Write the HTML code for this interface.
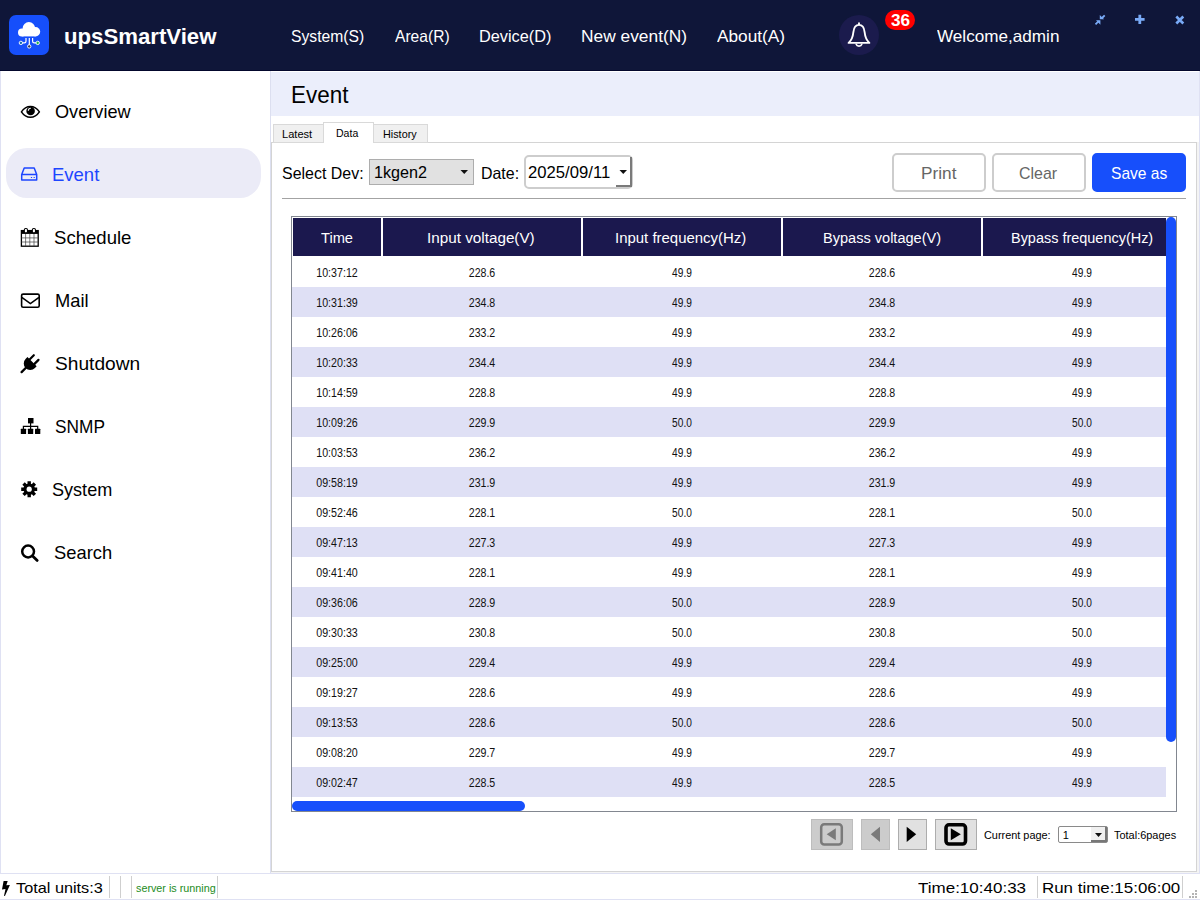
<!DOCTYPE html>
<html><head><meta charset="utf-8"><title>upsSmartView</title>
<style>
*{box-sizing:border-box;margin:0;padding:0}
html,body{width:1200px;height:900px;overflow:hidden;background:#fff;font-family:"Liberation Sans","DejaVu Sans",sans-serif;color:#111}
#app{position:relative;width:1200px;height:900px;overflow:hidden;background:#fff}
#app div,#app svg,#app span{position:absolute}
.t{white-space:nowrap;transform-origin:0 0}
#hdr{left:0;top:0;width:1200px;height:71px;background:#0f1639;border-bottom:1px solid #03072c}
#logo{left:9px;top:15px;width:40px;height:40px;border-radius:7px;background:#164ffb}
#bell{left:839px;top:15px;width:40px;height:40px;border-radius:20px;background:#1b1b4d}
#badge{left:885px;top:10px;width:30px;height:20px;border-radius:10px;background:#ff0000}
#side{left:0;top:71px;width:271px;height:802px;background:#fff;border-right:1px solid #dcdff0;border-left:1px solid #dfe1f3}
#sel{left:6px;top:148px;width:255px;height:50px;border-radius:21px;background:#ebebf7}
#title{left:271px;top:72px;width:928px;height:44px;background:#ebeefb}
#rbord{left:1199px;top:71px;width:1px;height:829px;background:#dfe1f3}
#tabbg{left:1197px;top:142px;width:2px;height:731px;background:#f4f4f4}
#tabbg2{left:271px;top:872px;width:928px;height:1px;background:#f4f4f4}
.tab{border:1px solid #d9d9d9;background:#f0f0f0}
#pane{left:271px;top:142px;width:926px;height:730px;border:1px solid #d4d4d4;background:#fff}
.btn{top:153px;width:94px;height:39px;border-radius:5px;border:2px solid #cdcdcd;background:#fff}
#hr{left:282px;top:198px;width:904px;height:1px;background:#a3a3a3}
#tbl{left:291px;top:216px;width:886px;height:596px;border:1px solid #828790;background:#fff}
.th{top:218px;height:38px;background:#1b184e}
.r{left:292px;width:874px;height:30px;overflow:hidden}
.r.alt{background:#dfe0f5}
.r span{top:0;height:30px;line-height:30px;font-size:12px;text-align:center;white-space:nowrap;color:#111;transform-origin:50% 0}
#vs{left:1166px;top:217px;width:10px;height:525px;border-radius:5px;background:#174ffb}
#hs{left:292px;top:801px;width:233px;height:10px;border-radius:5px;background:#174ffb}
.pb{top:819px;height:31px;border:1px solid #bdbdbd;background:#cccccc}
.pb.on{background:#e1e1e1;border-color:#adadad}
#status{left:0;top:873px;width:1200px;height:27px;background:#fff;border-top:1px solid #dfe1f3;border-bottom:1px solid #dfe1f3}
.sep{top:876px;width:1px;height:22px;background:#cfcfcf}
</style></head><body>
<div id="app">
<div id="hdr"></div>
<div id="logo"><svg style="left:0;top:0" width="40" height="40" viewBox="0 0 40 40">
<g fill="#fff"><circle cx="12.900" cy="17.500" r="3.900"/><circle cx="19.900" cy="13.400" r="6.300"/><circle cx="26.500" cy="16.700" r="4.700"/><rect x="12.900" y="15" width="13.600" height="6.400"/></g>
<g fill="none" stroke="#fff" stroke-width="1.200"><path d="M20.300 23v7M17 23v3.200q0 1.700-1.700 1.700h-2M23.600 23v3.200q0 1.700 1.700 1.700h2"/></g>
<circle cx="20.200" cy="31.400" r="1.700" fill="#333a55" stroke="#fff" stroke-width="0.900"/><circle cx="11.900" cy="27.900" r="1.700" fill="#1a6fb0" stroke="#fff" stroke-width="0.900"/><circle cx="28.700" cy="27.900" r="1.700" fill="#1fb24a" stroke="#fff" stroke-width="0.900"/></svg></div>
<div id="bell"><svg style="left:0;top:0" width="40" height="40" viewBox="0 0 40 40"><path d="M20 8.200v1.600M9.600 27.900C12.600 25.300 13.900 22 14.400 17C14.900 12.200 17 9.900 20 9.900C23 9.900 25.100 12.200 25.600 17C26.100 22 27.400 25.300 30.400 27.900Z" fill="none" stroke="#fff" stroke-width="1.900" stroke-linejoin="round" stroke-linecap="round"/><path d="M17.200 29.200a2.900 2.600 0 0 0 5.600 0" fill="none" stroke="#fff" stroke-width="1.600" stroke-linecap="round"/></svg></div>
<div id="badge"></div>
<svg style="left:1090px;top:10px" width="100" height="20" viewBox="1090 10 100 20"><g stroke="#79aaf6" fill="none"><path d="M1095.500 24.300l3.200-3.200M1104.700 15.300l-3.200 3.200" stroke-width="1.800"/><path d="M1139.800 14.700v9.300M1135 19.300h9.600" stroke-width="2.800"/><path d="M1176.300 16.500l7 7M1183.300 16.500l-7 7" stroke-width="2.600"/></g><path d="M1096 20.300h4.400v4.400zM1104.200 19.300h-4.400v-4.400z" fill="#79aaf6"/></svg>

<div id="side"></div>
<div id="sel"></div>
<svg style="left:0;top:70px" width="60" height="520" viewBox="0 70 60 520">
<path d="M21.400 111.900C24 108 27 106.500 30.400 106.500S36.800 108 39.400 111.900C36.800 115.800 33.800 117.300 30.400 117.300S24 115.800 21.400 111.900Z" fill="none" stroke="#000" stroke-width="1.500" stroke-linejoin="round"/><circle cx="30.600" cy="111" r="4.300" fill="#000"/><path d="M28.300 110.700a2.600 2.600 0 0 1 2.500-2.500" fill="none" stroke="#fff" stroke-width="1.100"/>
<path d="M21.700 174.500l2.500-6.500h10l2.500 6.500v5.500h-15z M21.700 174.500h15" fill="none" stroke="#1d46ff" stroke-width="1.500" stroke-linejoin="round"/><path d="M30.900 177.500h1.200M33.600 177.500h1.200" stroke="#1d46ff" stroke-width="1.200"/>
<rect x="21.400" y="230.600" width="16.800" height="15.600" fill="#fff" stroke="#000" stroke-width="1.300"/><rect x="21.400" y="230.600" width="16.800" height="3.300" fill="#000"/><path d="M25.600 234v12M29.800 234v12M34 234v12M21.400 237.900h16.800M21.400 242h16.800" stroke="#444" stroke-width="0.700" fill="none"/><rect x="24.300" y="228.500" width="3.200" height="4.400" rx="1.400" fill="#fff" stroke="#000" stroke-width="1.100"/><rect x="32.300" y="228.500" width="3.200" height="4.400" rx="1.400" fill="#fff" stroke="#000" stroke-width="1.100"/>
<rect x="21.600" y="294.100" width="17.600" height="13.100" rx="1.500" fill="none" stroke="#000" stroke-width="1.600"/><path d="M21.800 297.300l8.600 6.300 8.600-6.300" fill="none" stroke="#000" stroke-width="1.600"/>
<g transform="translate(29.500 364.200) rotate(45)"><path d="M-6.500-3.600h13v2.400a6.500 6.700 0 0 1-13 0z" fill="#000"/><path d="M-3.300-9.400v6M3.300-9.400v6" stroke="#000" stroke-width="2.200" stroke-linecap="round"/><path d="M0 4v7.200" stroke="#000" stroke-width="2.300" stroke-linecap="round"/></g>
<g fill="#000"><rect x="28" y="418" width="5.500" height="5.400"/><rect x="20.800" y="428.800" width="5.300" height="5.200" rx="0.500"/><rect x="27.900" y="428.800" width="5.300" height="5.200" rx="0.500"/><rect x="35" y="428.800" width="5.300" height="5.200" rx="0.500"/></g><path d="M30.600 423v6M23.400 429v-2.700h14.300v2.700" fill="none" stroke="#000" stroke-width="1.200"/>
<g transform="translate(29.200 489.200)"><g stroke="#000" stroke-width="3.400"><path d="M0-8v16M-8 0h16M-5.660-5.660l11.320 11.320M-5.660 5.660l11.320-11.320"/></g><circle r="5.800" fill="#000"/><circle r="2.600" fill="#fff"/></g>
<circle cx="28.100" cy="551.500" r="5.900" fill="none" stroke="#000" stroke-width="2.500"/><path d="M32.600 556l4.600 4.400" stroke="#000" stroke-width="2.800" stroke-linecap="round"/>
</svg>

<div id="title"></div>
<div id="rbord"></div>
<div id="tabbg"></div><div id="tabbg2"></div>
<div id="pane"></div>
<div class="tab" style="left:273px;top:124px;width:51px;height:19px"></div>
<div class="tab" style="left:373px;top:124px;width:55px;height:19px"></div>
<div class="tab" style="left:323px;top:122px;width:51px;height:21px;background:#fff;border-bottom:none"></div>

<div style="left:369px;top:159px;width:105px;height:26px;background:#e1e1e1;border:1px solid #adadad"></div>
<svg style="left:460px;top:169px" width="9" height="6"><path d="M0.500 1h7.500l-3.750 4z" fill="#111"/></svg>
<div style="left:524px;top:155px;width:109px;height:34px;background:#fff;border:2px solid #cdcdcd;border-radius:5px"></div>
<div style="left:616px;top:157px;width:16px;height:30px;background:#fff;border-right:2px solid #7a7a7a;border-bottom:2px solid #7a7a7a"></div>
<svg style="left:619px;top:169px" width="9" height="6"><path d="M0.500 1h7.500l-3.750 4z" fill="#111"/></svg>
<div class="btn" style="left:892px"></div>
<div class="btn" style="left:992px"></div>
<div class="btn" style="left:1092px;background:#174ffb;border-color:#174ffb"></div>
<div id="hr"></div>

<div id="tbl"></div>
<div class="th" style="left:293px;width:88px"></div>
<div class="th" style="left:383px;width:198px"></div>
<div class="th" style="left:583px;width:198px"></div>
<div class="th" style="left:783px;width:198px"></div>
<div class="th" style="left:983px;width:183px"></div>
<div class="r" style="top:257px"><span style="left:-14.9px;width:120px;top:1.10px;transform:scaleX(0.8889)">10:37:12</span><span style="left:129.5px;width:120px;top:1.10px;transform:scaleX(0.8835)">228.6</span><span style="left:329.5px;width:120px;top:1.10px;transform:scaleX(0.8452)">49.9</span><span style="left:529.5px;width:120px;top:1.10px;transform:scaleX(0.8835)">228.6</span><span style="left:729.5px;width:120px;top:1.10px;transform:scaleX(0.8452)">49.9</span></div>
<div class="r alt" style="top:287px"><span style="left:-14.9px;width:120px;top:1.10px;transform:scaleX(0.8889)">10:31:39</span><span style="left:129.5px;width:120px;top:1.10px;transform:scaleX(0.8835)">234.8</span><span style="left:329.5px;width:120px;top:1.10px;transform:scaleX(0.8452)">49.9</span><span style="left:529.5px;width:120px;top:1.10px;transform:scaleX(0.8835)">234.8</span><span style="left:729.5px;width:120px;top:1.10px;transform:scaleX(0.8452)">49.9</span></div>
<div class="r" style="top:317px"><span style="left:-14.9px;width:120px;top:1.10px;transform:scaleX(0.8889)">10:26:06</span><span style="left:129.5px;width:120px;top:1.10px;transform:scaleX(0.8835)">233.2</span><span style="left:329.5px;width:120px;top:1.10px;transform:scaleX(0.8452)">49.9</span><span style="left:529.5px;width:120px;top:1.10px;transform:scaleX(0.8835)">233.2</span><span style="left:729.5px;width:120px;top:1.10px;transform:scaleX(0.8452)">49.9</span></div>
<div class="r alt" style="top:347px"><span style="left:-14.9px;width:120px;top:1.10px;transform:scaleX(0.8889)">10:20:33</span><span style="left:129.5px;width:120px;top:1.10px;transform:scaleX(0.8835)">234.4</span><span style="left:329.5px;width:120px;top:1.10px;transform:scaleX(0.8452)">49.9</span><span style="left:529.5px;width:120px;top:1.10px;transform:scaleX(0.8835)">234.4</span><span style="left:729.5px;width:120px;top:1.10px;transform:scaleX(0.8452)">49.9</span></div>
<div class="r" style="top:377px"><span style="left:-14.9px;width:120px;top:1.10px;transform:scaleX(0.8889)">10:14:59</span><span style="left:129.5px;width:120px;top:1.10px;transform:scaleX(0.8835)">228.8</span><span style="left:329.5px;width:120px;top:1.10px;transform:scaleX(0.8452)">49.9</span><span style="left:529.5px;width:120px;top:1.10px;transform:scaleX(0.8835)">228.8</span><span style="left:729.5px;width:120px;top:1.10px;transform:scaleX(0.8452)">49.9</span></div>
<div class="r alt" style="top:407px"><span style="left:-14.9px;width:120px;top:1.10px;transform:scaleX(0.8889)">10:09:26</span><span style="left:129.5px;width:120px;top:1.10px;transform:scaleX(0.8835)">229.9</span><span style="left:329.5px;width:120px;top:1.10px;transform:scaleX(0.8452)">50.0</span><span style="left:529.5px;width:120px;top:1.10px;transform:scaleX(0.8835)">229.9</span><span style="left:729.5px;width:120px;top:1.10px;transform:scaleX(0.8452)">50.0</span></div>
<div class="r" style="top:437px"><span style="left:-14.9px;width:120px;top:1.10px;transform:scaleX(0.8889)">10:03:53</span><span style="left:129.5px;width:120px;top:1.10px;transform:scaleX(0.8835)">236.2</span><span style="left:329.5px;width:120px;top:1.10px;transform:scaleX(0.8452)">49.9</span><span style="left:529.5px;width:120px;top:1.10px;transform:scaleX(0.8835)">236.2</span><span style="left:729.5px;width:120px;top:1.10px;transform:scaleX(0.8452)">49.9</span></div>
<div class="r alt" style="top:467px"><span style="left:-14.9px;width:120px;top:1.10px;transform:scaleX(0.8889)">09:58:19</span><span style="left:129.5px;width:120px;top:1.10px;transform:scaleX(0.8835)">231.9</span><span style="left:329.5px;width:120px;top:1.10px;transform:scaleX(0.8452)">49.9</span><span style="left:529.5px;width:120px;top:1.10px;transform:scaleX(0.8835)">231.9</span><span style="left:729.5px;width:120px;top:1.10px;transform:scaleX(0.8452)">49.9</span></div>
<div class="r" style="top:497px"><span style="left:-14.9px;width:120px;top:1.10px;transform:scaleX(0.8889)">09:52:46</span><span style="left:129.5px;width:120px;top:1.10px;transform:scaleX(0.8835)">228.1</span><span style="left:329.5px;width:120px;top:1.10px;transform:scaleX(0.8452)">50.0</span><span style="left:529.5px;width:120px;top:1.10px;transform:scaleX(0.8835)">228.1</span><span style="left:729.5px;width:120px;top:1.10px;transform:scaleX(0.8452)">50.0</span></div>
<div class="r alt" style="top:527px"><span style="left:-14.9px;width:120px;top:1.10px;transform:scaleX(0.8889)">09:47:13</span><span style="left:129.5px;width:120px;top:1.10px;transform:scaleX(0.8835)">227.3</span><span style="left:329.5px;width:120px;top:1.10px;transform:scaleX(0.8452)">49.9</span><span style="left:529.5px;width:120px;top:1.10px;transform:scaleX(0.8835)">227.3</span><span style="left:729.5px;width:120px;top:1.10px;transform:scaleX(0.8452)">49.9</span></div>
<div class="r" style="top:557px"><span style="left:-14.9px;width:120px;top:1.10px;transform:scaleX(0.8889)">09:41:40</span><span style="left:129.5px;width:120px;top:1.10px;transform:scaleX(0.8835)">228.1</span><span style="left:329.5px;width:120px;top:1.10px;transform:scaleX(0.8452)">49.9</span><span style="left:529.5px;width:120px;top:1.10px;transform:scaleX(0.8835)">228.1</span><span style="left:729.5px;width:120px;top:1.10px;transform:scaleX(0.8452)">49.9</span></div>
<div class="r alt" style="top:587px"><span style="left:-14.9px;width:120px;top:1.10px;transform:scaleX(0.8889)">09:36:06</span><span style="left:129.5px;width:120px;top:1.10px;transform:scaleX(0.8835)">228.9</span><span style="left:329.5px;width:120px;top:1.10px;transform:scaleX(0.8452)">50.0</span><span style="left:529.5px;width:120px;top:1.10px;transform:scaleX(0.8835)">228.9</span><span style="left:729.5px;width:120px;top:1.10px;transform:scaleX(0.8452)">50.0</span></div>
<div class="r" style="top:617px"><span style="left:-14.9px;width:120px;top:1.10px;transform:scaleX(0.8889)">09:30:33</span><span style="left:129.5px;width:120px;top:1.10px;transform:scaleX(0.8835)">230.8</span><span style="left:329.5px;width:120px;top:1.10px;transform:scaleX(0.8452)">50.0</span><span style="left:529.5px;width:120px;top:1.10px;transform:scaleX(0.8835)">230.8</span><span style="left:729.5px;width:120px;top:1.10px;transform:scaleX(0.8452)">50.0</span></div>
<div class="r alt" style="top:647px"><span style="left:-14.9px;width:120px;top:1.10px;transform:scaleX(0.8889)">09:25:00</span><span style="left:129.5px;width:120px;top:1.10px;transform:scaleX(0.8835)">229.4</span><span style="left:329.5px;width:120px;top:1.10px;transform:scaleX(0.8452)">49.9</span><span style="left:529.5px;width:120px;top:1.10px;transform:scaleX(0.8835)">229.4</span><span style="left:729.5px;width:120px;top:1.10px;transform:scaleX(0.8452)">49.9</span></div>
<div class="r" style="top:677px"><span style="left:-14.9px;width:120px;top:1.10px;transform:scaleX(0.8889)">09:19:27</span><span style="left:129.5px;width:120px;top:1.10px;transform:scaleX(0.8835)">228.6</span><span style="left:329.5px;width:120px;top:1.10px;transform:scaleX(0.8452)">49.9</span><span style="left:529.5px;width:120px;top:1.10px;transform:scaleX(0.8835)">228.6</span><span style="left:729.5px;width:120px;top:1.10px;transform:scaleX(0.8452)">49.9</span></div>
<div class="r alt" style="top:707px"><span style="left:-14.9px;width:120px;top:1.10px;transform:scaleX(0.8889)">09:13:53</span><span style="left:129.5px;width:120px;top:1.10px;transform:scaleX(0.8835)">228.6</span><span style="left:329.5px;width:120px;top:1.10px;transform:scaleX(0.8452)">50.0</span><span style="left:529.5px;width:120px;top:1.10px;transform:scaleX(0.8835)">228.6</span><span style="left:729.5px;width:120px;top:1.10px;transform:scaleX(0.8452)">50.0</span></div>
<div class="r" style="top:737px"><span style="left:-14.9px;width:120px;top:1.10px;transform:scaleX(0.8889)">09:08:20</span><span style="left:129.5px;width:120px;top:1.10px;transform:scaleX(0.8835)">229.7</span><span style="left:329.5px;width:120px;top:1.10px;transform:scaleX(0.8452)">49.9</span><span style="left:529.5px;width:120px;top:1.10px;transform:scaleX(0.8835)">229.7</span><span style="left:729.5px;width:120px;top:1.10px;transform:scaleX(0.8452)">49.9</span></div>
<div class="r alt" style="top:767px"><span style="left:-14.9px;width:120px;top:1.10px;transform:scaleX(0.8889)">09:02:47</span><span style="left:129.5px;width:120px;top:1.10px;transform:scaleX(0.8835)">228.5</span><span style="left:329.5px;width:120px;top:1.10px;transform:scaleX(0.8452)">49.9</span><span style="left:529.5px;width:120px;top:1.10px;transform:scaleX(0.8835)">228.5</span><span style="left:729.5px;width:120px;top:1.10px;transform:scaleX(0.8452)">49.9</span></div>
<div id="vs"></div><div id="hs"></div>

<div class="pb" style="left:811px;width:42px"></div>
<div class="pb" style="left:861px;width:29px"></div>
<div class="pb on" style="left:898px;width:29px"></div>
<div class="pb on" style="left:935px;width:42px"></div>
<svg style="left:811px;top:818px" width="170" height="34" viewBox="811 818 170 34">
<rect x="821.200" y="824.200" width="20.600" height="20.400" rx="3" fill="none" stroke="#7a7a7a" stroke-width="2.500"/><path d="M835.800 828.300v12l-9.100-6z" fill="#7a7a7a"/>
<path d="M880 826.700v15.300l-9.200-7.650z" fill="#7a7a7a"/>
<path d="M906.700 826.700v15.300l9.500-7.650z" fill="#000"/>
<rect x="946" y="824.800" width="19.500" height="19.200" rx="3" fill="none" stroke="#000" stroke-width="3.600"/><path d="M950.800 828.300v12l10-6z" fill="#000"/>
</svg>
<div style="left:1058px;top:826px;width:50px;height:17px;border:1px solid #8a8a8a;border-radius:2px;background:#fff"></div>
<div style="left:1091px;top:827px;width:16px;height:15px;background:#f0f0f0;border-right:2px solid #777;border-bottom:2px solid #777"></div>
<svg style="left:1094px;top:832px" width="10" height="6"><path d="M1 1h7l-3.500 4z" fill="#111"/></svg>

<div id="status"></div>
<svg style="left:0;top:876px" width="12" height="24" viewBox="0 876 12 24"><path d="M3.600 881L7.700 881L6.300 885.200L9.900 884.900L4.900 895.900L4 895.700L5.500 889L2 889.400Z" fill="#000"/></svg>
<div class="sep" style="left:109px"></div><div class="sep" style="left:120px"></div><div class="sep" style="left:131px"></div><div class="sep" style="left:217px"></div>
<div class="sep" style="left:1037px"></div>
<div class="sep" style="left:1182px"></div>
<svg style="left:1189px;top:890px" width="9" height="9"><g fill="#b4b4b4"><rect x="6" y="6" width="2" height="2"/><rect x="6" y="3" width="2" height="2"/><rect x="3" y="6" width="2" height="2"/><rect x="6" y="0" width="2" height="2"/><rect x="3" y="3" width="2" height="2"/><rect x="0" y="6" width="2" height="2"/></g></svg>
<div class="t" style="left:64.24px;top:19.60px;font-size:22px;line-height:33px;color:#fff;transform:scaleX(1.0083);font-weight:bold">upsSmartView</div>
<div class="t" style="left:290.75px;top:24.30px;font-size:16.5px;line-height:25px;color:#fff;transform:scaleX(0.9507)">System(S)</div>
<div class="t" style="left:394.58px;top:24.30px;font-size:16.5px;line-height:25px;color:#fff;transform:scaleX(0.9468)">Area(R)</div>
<div class="t" style="left:478.77px;top:24.30px;font-size:16.5px;line-height:25px;color:#fff;transform:scaleX(0.9878)">Device(D)</div>
<div class="t" style="left:580.89px;top:24.30px;font-size:16.5px;line-height:25px;color:#fff;transform:scaleX(1.0516)">New event(N)</div>
<div class="t" style="left:716.56px;top:24.30px;font-size:16.5px;line-height:25px;color:#fff;transform:scaleX(1.0459)">About(A)</div>
<div class="t" style="left:937.01px;top:24.30px;font-size:16.5px;line-height:25px;color:#fff;transform:scaleX(1.0376)">Welcome,admin</div>
<div class="t" style="left:890.71px;top:8.20px;font-size:17px;line-height:26px;color:#fff;transform:scaleX(1.0089);font-weight:bold">36</div>
<div class="t" style="left:54.85px;top:97.70px;font-size:19px;line-height:28px;color:#000;transform:scaleX(0.9550)">Overview</div>
<div class="t" style="left:52.05px;top:160.70px;font-size:19px;line-height:28px;color:#1d46ff;transform:scaleX(0.9735)">Event</div>
<div class="t" style="left:53.72px;top:223.70px;font-size:19px;line-height:28px;color:#000;transform:scaleX(0.9775)">Schedule</div>
<div class="t" style="left:54.87px;top:286.70px;font-size:19px;line-height:28px;color:#000;transform:scaleX(0.9629)">Mail</div>
<div class="t" style="left:54.79px;top:349.70px;font-size:19px;line-height:28px;color:#000;transform:scaleX(1.0081)">Shutdown</div>
<div class="t" style="left:54.89px;top:412.70px;font-size:19px;line-height:28px;color:#000;transform:scaleX(0.9095)">SNMP</div>
<div class="t" style="left:52.04px;top:475.70px;font-size:19px;line-height:28px;color:#000;transform:scaleX(0.9509)">System</div>
<div class="t" style="left:54.03px;top:538.70px;font-size:19px;line-height:28px;color:#000;transform:scaleX(0.9656)">Search</div>
<div class="t" style="left:291.15px;top:77.80px;font-size:23px;line-height:34px;color:#000;transform:scaleX(0.9764)">Event</div>
<div class="t" style="left:282.04px;top:126.00px;font-size:11.5px;line-height:17px;color:#000;transform:scaleX(0.9629)">Latest</div>
<div class="t" style="left:336.28px;top:124.60px;font-size:11.5px;line-height:17px;color:#000;transform:scaleX(0.9153)">Data</div>
<div class="t" style="left:382.86px;top:126.00px;font-size:11.5px;line-height:17px;color:#000;transform:scaleX(0.9407)">History</div>
<div class="t" style="left:282.03px;top:160.80px;font-size:16.5px;line-height:25px;color:#000;transform:scaleX(0.9671)">Select Dev:</div>
<div class="t" style="left:373.59px;top:159.80px;font-size:16.5px;line-height:25px;color:#000;transform:scaleX(0.9803)">1kgen2</div>
<div class="t" style="left:480.60px;top:160.80px;font-size:16.5px;line-height:25px;color:#000;transform:scaleX(0.9659)">Date:</div>
<div class="t" style="left:527.79px;top:159.80px;font-size:16.5px;line-height:25px;color:#000;transform:scaleX(1.0102)">2025/09/11</div>
<div class="t" style="left:921.10px;top:160.90px;font-size:17px;line-height:26px;color:#666;transform:scaleX(1.0148)">Print</div>
<div class="t" style="left:1019.06px;top:160.90px;font-size:17px;line-height:26px;color:#666;transform:scaleX(0.9375)">Clear</div>
<div class="t" style="left:1111.08px;top:160.90px;font-size:17px;line-height:26px;color:#fff;transform:scaleX(0.9167)">Save as</div>
<div class="t" style="left:320.79px;top:226.00px;font-size:15.5px;line-height:23px;color:#fff;transform:scaleX(0.9441)">Time</div>
<div class="t" style="left:427.39px;top:226.00px;font-size:15.5px;line-height:23px;color:#fff;transform:scaleX(0.9843)">Input voltage(V)</div>
<div class="t" style="left:615.41px;top:226.00px;font-size:15.5px;line-height:23px;color:#fff;transform:scaleX(0.9646)">Input frequency(Hz)</div>
<div class="t" style="left:823.03px;top:226.00px;font-size:15.5px;line-height:23px;color:#fff;transform:scaleX(0.9388)">Bypass voltage(V)</div>
<div class="t" style="left:1010.94px;top:226.00px;font-size:15.5px;line-height:23px;color:#fff;transform:scaleX(0.9324)">Bypass frequency(Hz)</div>
<div class="t" style="left:983.98px;top:827.34px;font-size:11px;line-height:16px;color:#000;transform:scaleX(0.9898)">Current page:</div>
<div class="t" style="left:1062.71px;top:827.34px;font-size:11px;line-height:16px;color:#000;transform:scaleX(1.0000)">1</div>
<div class="t" style="left:1114.15px;top:827.34px;font-size:11px;line-height:16px;color:#000;transform:scaleX(0.9957)">Total:6pages</div>
<div class="t" style="left:15.86px;top:877.20px;font-size:15px;line-height:22px;color:#000;transform:scaleX(1.0846)">Total units:3</div>
<div class="t" style="left:135.58px;top:880.04px;font-size:11px;line-height:16px;color:#1c8c1c;transform:scaleX(0.9795)">server is running</div>
<div class="t" style="left:917.95px;top:877.30px;font-size:15px;line-height:22px;color:#000;transform:scaleX(1.1334)">Time:10:40:33</div>
<div class="t" style="left:1041.55px;top:877.30px;font-size:15px;line-height:22px;color:#000;transform:scaleX(1.1274)">Run time:15:06:00</div>
</div>
</body></html>
